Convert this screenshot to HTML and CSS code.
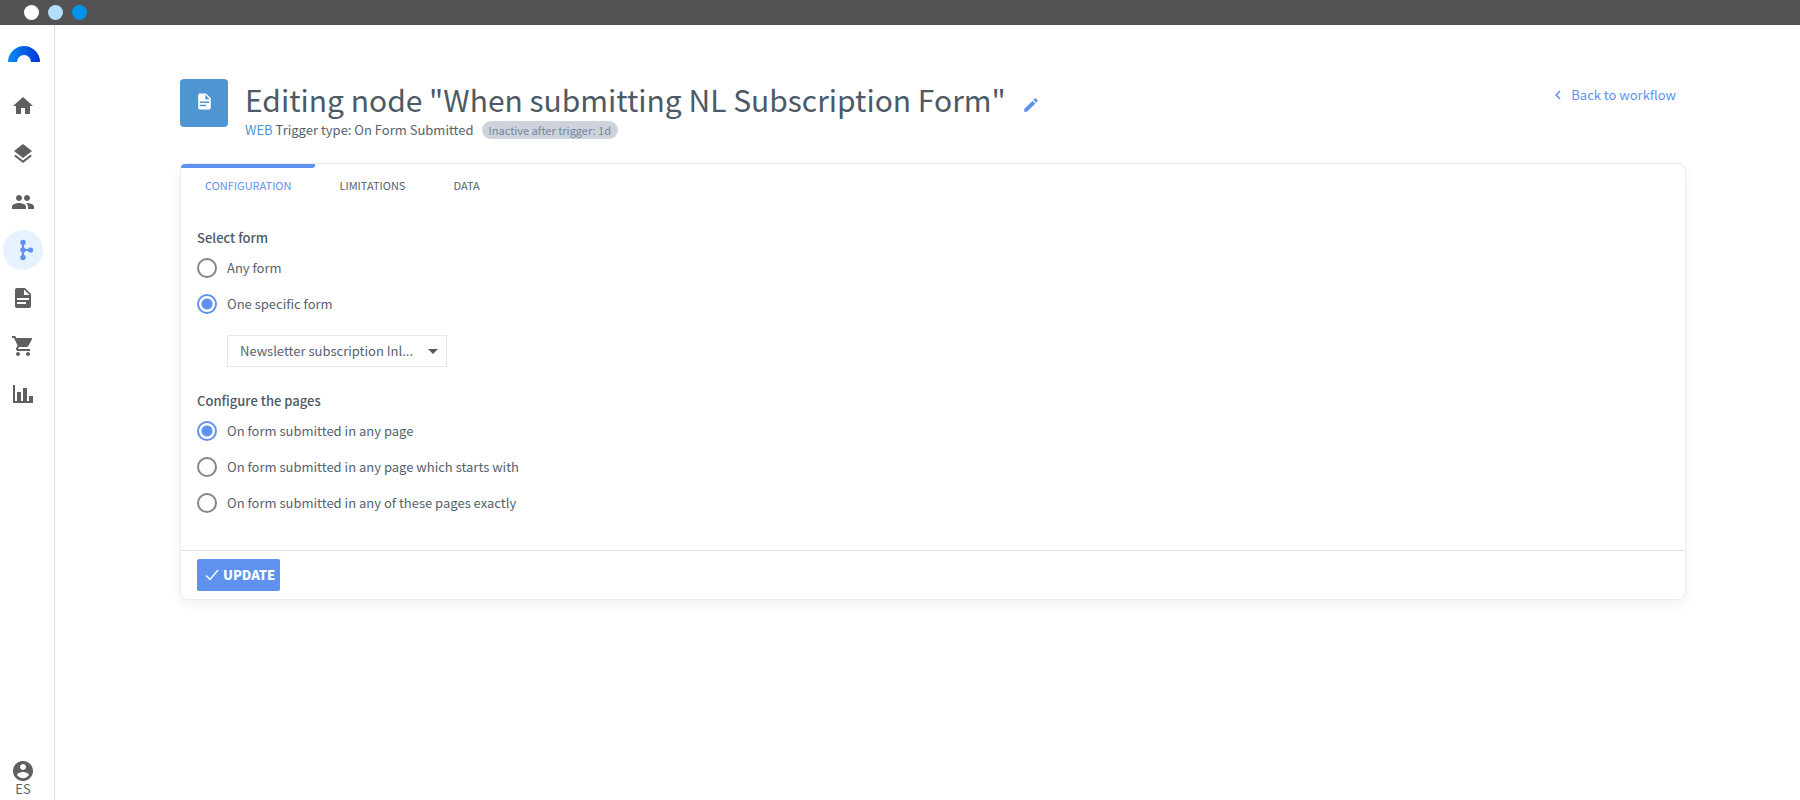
FILE: index.html
```
<!DOCTYPE html>
<html lang="en">
<head>
<meta charset="utf-8">
<meta name="viewport" content="width=device-width, initial-scale=1">
<title>Editing node</title>
<link rel="stylesheet" href="styles.css">
</head>
<body>
<header class="topbar">
  <span class="dot dot-white"></span>
  <span class="dot dot-light"></span>
  <span class="dot dot-blue"></span>
</header>
<div class="shell">
  <aside class="sidebar">
    <a class="logo" href="#" aria-label="Home page">
      <svg width="32" height="16" viewBox="0 0 32 16">
        <defs><linearGradient id="arc" x1="0" y1="0" x2="1" y2="0"><stop offset="0" stop-color="#0590f0"/><stop offset="1" stop-color="#0030d8"/></linearGradient></defs>
        <path fill="url(#arc)" d="M0 16a16 16 0 0 1 32 0h-9a7 7 0 0 0-14 0z"/>
      </svg>
    </a>
    <nav class="nav">
      <a class="nav-item" href="#" aria-label="Dashboard"><svg class="icon" viewBox="0 0 24 24"><path d="M10 20v-6h4v6h5v-8h3L12 3 2 12h3v8z"/></svg></a>
      <a class="nav-item" href="#" aria-label="Layers"><svg class="icon" viewBox="0 0 24 24"><path d="M11.990 18.540l-7.370-5.730L3 14.070l9 7 9-7-1.630-1.270-7.380 5.740zM12 16l7.360-5.730L21 9l-9-7-9 7 1.630 1.270L12 16z"/></svg></a>
      <a class="nav-item" href="#" aria-label="Contacts"><svg class="icon" viewBox="0 0 24 24"><path d="M16 11c1.660 0 2.990-1.340 2.990-3S17.660 5 16 5s-3 1.340-3 3 1.340 3 3 3zm-8 0c1.660 0 2.990-1.340 2.990-3S9.660 5 8 5 5 6.340 5 8s1.340 3 3 3zm0 2c-2.330 0-7 1.170-7 3.500V19h14v-2.500c0-2.330-4.670-3.500-7-3.500zm8 0c-.29 0-.62.02-.97.050 1.160.840 1.970 1.970 1.970 3.450V19h6v-2.500c0-2.330-4.670-3.500-7-3.500z"/></svg></a>
      <a class="nav-item active" href="#" aria-label="Workflows"><svg class="icon" viewBox="0 0 24 24"><path d="M11 4h2v7h7v2h-7v7h-2z"/><circle cx="12" cy="4.500" r="2.700"/><circle cx="12" cy="12" r="2.700"/><circle cx="12" cy="19.500" r="2.700"/><circle cx="19.600" cy="12" r="2.600"/></svg></a>
      <a class="nav-item" href="#" aria-label="Documents"><svg class="icon" viewBox="0 0 24 24"><path d="M14 2H6c-1.100 0-1.990.9-1.990 2L4 20c0 1.100.89 2 1.990 2H18c1.100 0 2-.9 2-2V8l-6-6zm1 16H6v-2h9v2zm3-4H6v-2h12v2zm-5-5V3.500L18.500 9H13z"/></svg></a>
      <a class="nav-item" href="#" aria-label="Store"><svg class="icon" viewBox="0 0 24 24"><path d="M7 18c-1.100 0-1.990.9-1.990 2S5.900 22 7 22s2-.9 2-2-.9-2-2-2zM1 2v2h2l3.600 7.590-1.350 2.450c-.16.28-.25.61-.25.960 0 1.100.9 2 2 2h12v-2H7.420c-.14 0-.25-.11-.25-.25l.03-.12.9-1.630h7.450c.75 0 1.410-.41 1.750-1.030l3.580-6.490c.08-.14.12-.31.12-.48 0-.55-.45-1-1-1H5.210l-.94-2H1zm16 16c-1.100 0-1.990.9-1.990 2s.89 2 1.990 2 2-.9 2-2-.9-2-2-2z"/></svg></a>
      <a class="nav-item" href="#" aria-label="Reports"><svg class="icon" viewBox="0 0 24 24"><path d="M2 3h2v16h2v-9h4v9h2V6h4v13h2v-5h4v7H2z"/></svg></a>
    </nav>
    <div class="account">
      <button class="account-button" type="button" aria-label="Account"><svg class="icon" viewBox="0 0 24 24"><path d="M12 2C6.480 2 2 6.480 2 12s4.480 10 10 10 10-4.480 10-10S17.520 2 12 2zm0 3c1.660 0 3 1.340 3 3s-1.340 3-3 3-3-1.340-3-3 1.340-3 3-3zm0 14.200c-2.500 0-4.710-1.280-6-3.220.03-1.990 4-3.080 6-3.080 1.990 0 5.970 1.090 6 3.080-1.290 1.940-3.500 3.220-6 3.220z"/></svg></button>
      <span class="lang">ES</span>
    </div>
  </aside>
  <main class="main">
    <div class="page-head">
      <div class="tile"><svg width="19" height="19" viewBox="0 0 24 24"><path d="M14 2H6c-1.100 0-1.990.9-1.990 2L4 20c0 1.100.89 2 1.990 2H18c1.100 0 2-.9 2-2V8l-6-6zm2 16H6v-2h8v2zm2-4H6v-2h12v2zm-5-5V3.500L18.500 9H13z"/></svg></div>
      <div class="heading">
        <div class="title-row">
          <h1 class="title">Editing node "When submitting NL Subscription Form"</h1>
          <button class="edit" type="button" aria-label="Edit name"><svg width="18" height="18" viewBox="0 0 24 24"><path d="M3 17.250V21h3.750L17.810 9.940l-3.750-3.750L3 17.250zM20.710 7.040c.39-.39.39-1.020 0-1.410l-2.340-2.340c-.39-.39-1.020-.39-1.410 0l-1.830 1.830 3.750 3.750 1.830-1.830z"/></svg></button>
        </div>
        <div class="meta"><span><span class="web">WEB</span> Trigger type: On Form Submitted</span><span class="badge">Inactive after trigger: 1d</span></div>
      </div>
      <a class="back" href="#"><svg width="18" height="18" viewBox="0 0 24 24"><path d="M15.410 7.410L14 6l-6 6 6 6 1.410-1.410L10.830 12z"/></svg>Back to workflow</a>
    </div>
    <form class="card">
      <div class="tabs">
        <button class="tab current" type="button">CONFIGURATION</button>
        <button class="tab" type="button">LIMITATIONS</button>
        <button class="tab" type="button">DATA</button>
      </div>
      <div class="fields">
        <fieldset class="group">
          <legend class="legend">Select form</legend>
          <label class="option"><input class="radio" type="radio" name="form">Any form</label>
          <label class="option"><input class="radio" type="radio" name="form" checked>One specific form</label>
          <div class="picker">
            <select class="select" aria-label="Form"><option>Newsletter subscription Inl...</option></select>
            <svg class="caret" width="10" height="5" viewBox="0 0 10 5"><path d="M0 0h10L5 5z"/></svg>
          </div>
        </fieldset>
        <fieldset class="group">
          <legend class="legend">Configure the pages</legend>
          <label class="option"><input class="radio" type="radio" name="pages" checked>On form submitted in any page</label>
          <label class="option"><input class="radio" type="radio" name="pages">On form submitted in any page which starts with</label>
          <label class="option"><input class="radio" type="radio" name="pages">On form submitted in any of these pages exactly</label>
        </fieldset>
      </div>
      <div class="card-foot">
        <button class="update" type="button"><svg width="14" height="12" viewBox="0 0 14 12"><path d="M1 6.500L5 10.500L13 1" fill="none" stroke="#fff" stroke-width="1.400"/></svg>UPDATE</button>
      </div>
    </form>
  </main>
</div>
</body>
</html>
```
FILE: styles.css
```
* { box-sizing: border-box; }

body {
  margin: 0;
  min-height: 100vh;
  display: flex;
  flex-direction: column;
  background: #fff;
  color: #56626d;
  font: 13px/20px "Noto Sans CJK SC", "Noto Sans", sans-serif;
}

button, select { font: inherit; color: inherit; }
button { padding: 0; border: 0; background: none; }
a { color: inherit; text-decoration: none; }
svg { display: block; }

.topbar {
  display: flex;
  align-items: center;
  gap: 9px;
  height: 25px;
  padding-left: 24px;
  background: #535353;
}
.dot { width: 15px; height: 15px; border-radius: 50%; }
.dot-white { background: #fff; }
.dot-light { background: #b3dffc; }
.dot-blue { background: #0492ea; }

.shell { flex: 1; display: flex; }

.sidebar {
  display: flex;
  flex-direction: column;
  width: 55px;
  padding: 21px 0 5px 3px;
  border-right: 1px solid #dcdcdc;
}
.logo { padding-left: 5px; }
.nav { display: flex; flex-direction: column; gap: 8px; margin-top: 24px; }
.nav-item {
  display: flex;
  align-items: center;
  justify-content: center;
  width: 40px;
  height: 40px;
  border-radius: 50%;
}
.active { background: #e6f2ff; }
.icon { width: 24px; height: 24px; fill: #5f5f5f; }
.active .icon { fill: #5e92ee; }
.account {
  display: flex;
  flex-direction: column;
  align-items: center;
  width: 40px;
  margin-top: auto;
}
.lang { line-height: 12px; }

.main { flex: 1; min-width: 0; padding: 54px 114px 40px 125px; }

.page-head { display: flex; align-items: flex-start; gap: 17px; }
.tile {
  display: flex;
  align-items: center;
  justify-content: center;
  width: 48px;
  height: 48px;
  padding-bottom: 4px;
  border-radius: 4px;
  background: #4f95d2;
}
.tile svg { fill: #fff; }
.heading { flex: 1; }
.title-row { display: flex; align-items: center; gap: 16px; }
.title { margin: 0; color: #4d5965; font-size: 30px; font-weight: 400; line-height: 40px; }
.edit { padding-top: 12px; }
.edit svg { fill: #5e92ee; }
.meta { display: flex; align-items: center; gap: 8px; margin-top: 2px; line-height: 18px; }
.web { color: #4f95d2; }
.badge {
  padding: 0 7px;
  border-radius: 9px;
  background: #ced3db;
  color: #7485a5;
  font-size: 11px;
}
.back {
  display: flex;
  align-items: center;
  gap: 4px;
  padding: 6px 10px 0 0;
  color: #5e92ee;
}
.back svg { fill: #5e92ee; }

.card {
  margin-top: 24px;
  border: 1px solid #ececec;
  border-radius: 8px;
  box-shadow: 0 4px 12px rgba(0, 0, 0, 0.06);
}
.tabs { display: flex; }
.tab { padding: 0 24px 9px; font-size: 11px; line-height: 20px; }
.tab::before {
  content: "";
  display: block;
  height: 4px;
  margin: 0 -24px 7px;
  border-radius: 6px 0 4px 0;
}
.current { color: #5e92ee; }
.current::before { background: #5e92ee; }

.fields { display: grid; gap: 24px; padding: 24px 16px 21px; }
.group { min-width: 0; margin: 0; padding: 0; border: 0; }
.legend { padding: 0; margin-bottom: 10px; color: #4d5965; font-weight: 500; }
.option { display: flex; align-items: center; gap: 10px; margin-bottom: 16px; }
.radio {
  appearance: none;
  width: 20px;
  height: 20px;
  margin: 0;
  border: 2px solid #858585;
  border-radius: 50%;
}
.radio:checked {
  border-color: #5e92ee;
  background: radial-gradient(circle, #5e92ee 5px, transparent 6px);
}
.picker { display: grid; align-items: center; width: 220px; margin: 21px 0 0 30px; }
.select {
  grid-area: 1 / 1;
  appearance: none;
  width: 100%;
  height: 32px;
  padding: 0 28px 0 12px;
  border: 1px solid #e8e8e8;
  border-radius: 0;
  background: #fff;
}
.caret {
  grid-area: 1 / 1;
  justify-self: end;
  margin-right: 9px;
  fill: #4d5965;
  pointer-events: none;
}

.card-foot { padding: 8px 16px; border-top: 1px solid #e2e2e2; }
.update {
  display: flex;
  align-items: center;
  gap: 4px;
  height: 32px;
  padding: 0 5px 0 8px;
  border-radius: 2px;
  background: #5e92ee;
  color: #fff;
  font-weight: 900;
}
```
